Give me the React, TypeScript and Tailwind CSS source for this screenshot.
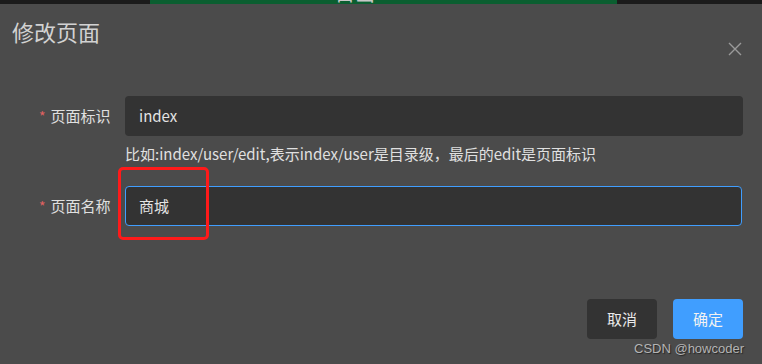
import React from "react";

export default function App() {
  const font = { fontFamily: '"Noto Sans CJK SC", "Noto Sans", sans-serif' };
  return (
    <div className="w-[762px] h-[364px] overflow-hidden bg-[#4b4b4b] relative" style={font}>
      {/* top strip */}
      <div className="flex h-[4px] w-full">
        <div className="w-[150px] bg-[#1b1b1b]" />
        <div className="w-[467px] bg-[#0b5e30] relative overflow-hidden">
          <span className="absolute left-[185px] top-[-17px] text-[20px] leading-[20px] text-[#c8c8c8]">目出</span>
        </div>
        <div className="flex-1 bg-[#1b1b1b]" />
      </div>

      {/* header */}
      <div className="flex items-start justify-between pl-[12px] pr-[20px] pt-[12px]">
        <div className="text-[22px] leading-[30px] text-[#d2d2d2]">修改页面</div>
        <svg width="14" height="14" viewBox="0 0 14 14" className="mt-[26px]">
          <path d="M1 1 L13 13 M13 1 L1 13" stroke="#9a9a9a" strokeWidth="1.4" />
        </svg>
      </div>

      {/* form */}
      <div className="flex flex-col pl-[39px] pr-[19px] mt-[40px]">
        <div className="flex items-center">
          <div className="w-[86px] flex items-center text-[15px] text-[#e0e0e0]">
            <span className="text-[#e06262] mr-[5px] text-[14px]">*</span>
            <span>页面标识</span>
          </div>
          <div className="flex-1 h-[40px] rounded-[4px] bg-[#333333] flex items-center pl-[14px] text-[15px] text-[#e4e4e4]">
            index
          </div>
        </div>
        <div className="ml-[86px] mt-[7px] text-[15px] leading-[22px] text-[#e0e0e0]">
          比如:index/user/edit,表示index/user是目录级，最后的edit是页面标识
        </div>
        <div className="flex items-center mt-[21px]">
          <div className="w-[86px] flex items-center text-[15px] text-[#e0e0e0]">
            <span className="text-[#e06262] mr-[5px] text-[14px]">*</span>
            <span>页面名称</span>
          </div>
          <div className="flex-1 mr-[1px] h-[40px] rounded-[4px] bg-[#333333] border border-[#409eff] flex items-center pl-[13px] text-[15px] text-[#e4e4e4]">
            商城
          </div>
        </div>
      </div>

      {/* red highlight */}
      <div className="absolute left-[118px] top-[167px] w-[91px] h-[73px] border-[3px] border-[#ff1a1a] rounded-[5px]" />

      {/* footer */}
      <div className="flex justify-end gap-[16px] pr-[19px] mt-[73px]">
        <button className="w-[70px] h-[40px] rounded-[4px] bg-[#333333] text-[15px] text-[#eaeaea]">取消</button>
        <button className="w-[70px] h-[40px] rounded-[4px] bg-[#409eff] text-[15px] text-[#f2f2f2]">确定</button>
      </div>

      <div
        className="absolute left-[634px] top-[341px] text-[13px] leading-[16px] text-[#b4b4b4]"
        style={{ fontFamily: '"Liberation Sans", Arial, sans-serif', textShadow: "1px 1px 1px rgba(0,0,0,0.5)" }}
      >
        CSDN @howcoder
      </div>
    </div>
  );
}
